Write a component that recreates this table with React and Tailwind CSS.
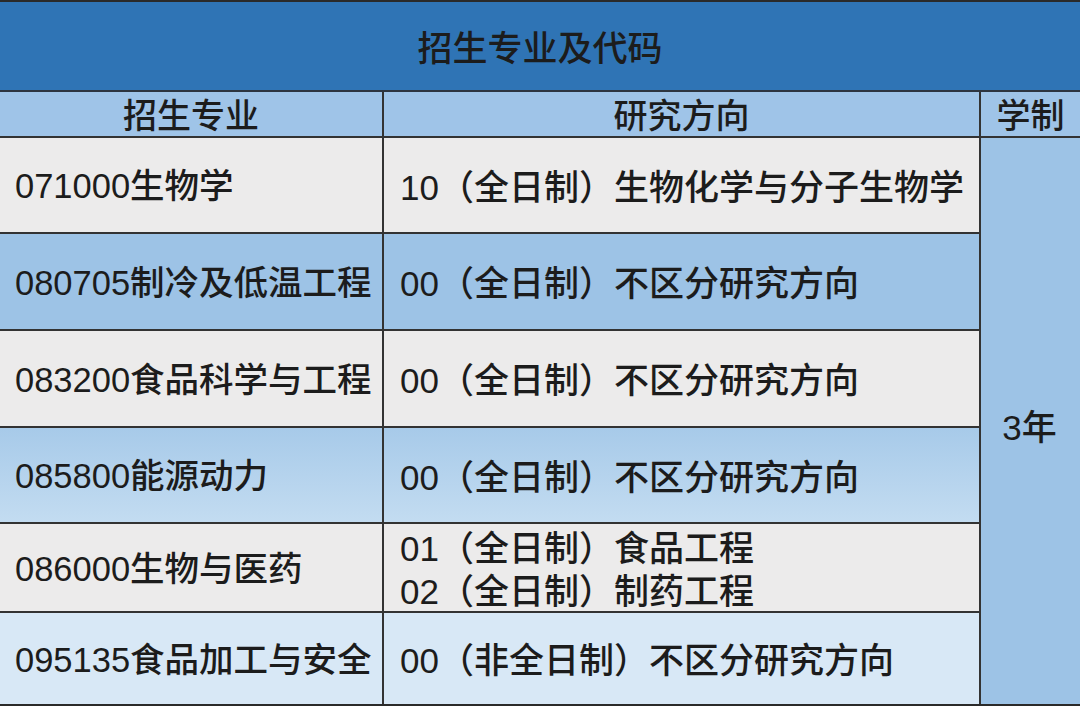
import React from 'react';

const rows = [
  { major: '071000生物学', dir: ['10（全日制）生物化学与分子生物学'], bg: 'bg-[#ecebeb]', h: 'h-[96px]' },
  { major: '080705制冷及低温工程', dir: ['00（全日制）不区分研究方向'], bg: 'bg-[#9dc3e6]', h: 'h-[97px]' },
  { major: '083200食品科学与工程', dir: ['00（全日制）不区分研究方向'], bg: 'bg-[#ecebeb]', h: 'h-[97px]' },
  { major: '085800能源动力', dir: ['00（全日制）不区分研究方向'], bg: 'bg-gradient-to-b from-[#a7cae9] to-[#c3dcf1]', h: 'h-[96px]' },
  { major: '086000生物与医药', dir: ['01（全日制）食品工程', '02（全日制）制药工程'], bg: 'bg-[#ecebeb]', h: 'h-[89px]' },
  { major: '095135食品加工与安全', dir: ['00（非全日制）不区分研究方向'], bg: 'bg-[#d8e8f6]', h: 'h-[91px]' },
];

export default function App() {
  return (
    <div
      className="w-[1080px] h-[706px] overflow-hidden bg-[#222] text-[#1c1c1c] text-[34px] font-medium"
      style={{ fontFamily: '"Liberation Sans", "Noto Sans CJK SC", sans-serif' }}
    >
      <div className="h-[2px] bg-[#2a2a2a]" />
      <div className="h-[90px] bg-[#2f74b5] border-b-2 border-[#2d3540] flex items-center justify-center pt-[4px] text-[35px] leading-none">
        招生专业及代码
      </div>
      <div className="grid grid-cols-[384px_597px_1fr]">
        {/* column headers */}
        <div className="h-[46px] bg-[#9fc4e8] border-b-2 border-r-2 border-[#333] flex items-center justify-center pt-[4px] leading-none">
          招生专业
        </div>
        <div className="h-[46px] bg-[#9fc4e8] border-b-2 border-r-2 border-[#333] flex items-center justify-center pt-[4px] leading-none">
          研究方向
        </div>
        <div className="h-[46px] bg-[#9fc4e8] border-b-2 border-[#333] flex items-center justify-center pt-[4px] leading-none">
          学制
        </div>

        <div className="col-span-2 flex flex-col">
          {rows.map((r, i) => (
            <div key={i} className={`flex ${r.h} ${r.bg} ${i < rows.length - 1 ? 'border-b-2 border-[#333]' : ''}`}>
              <div className="w-[384px] shrink-0 border-r-2 border-[#333] flex items-center pl-[15px] pt-[4px] text-[34.5px] whitespace-nowrap">
                {r.major}
              </div>
              <div className="flex-1 border-r-2 border-[#333] flex flex-col justify-center pl-[16px] pt-[4px] text-[35px] whitespace-nowrap leading-[43px]">
                {r.dir.map((d, j) => (
                  <div key={j}>{d}</div>
                ))}
              </div>
            </div>
          ))}
        </div>
        <div className="bg-[#9dc3e6] flex items-center justify-center pr-[2px] pt-[12px] text-[35px] leading-none">
          3年
        </div>
      </div>
      <div className="h-[2px] bg-[#2a2a2a]" />
    </div>
  );
}
